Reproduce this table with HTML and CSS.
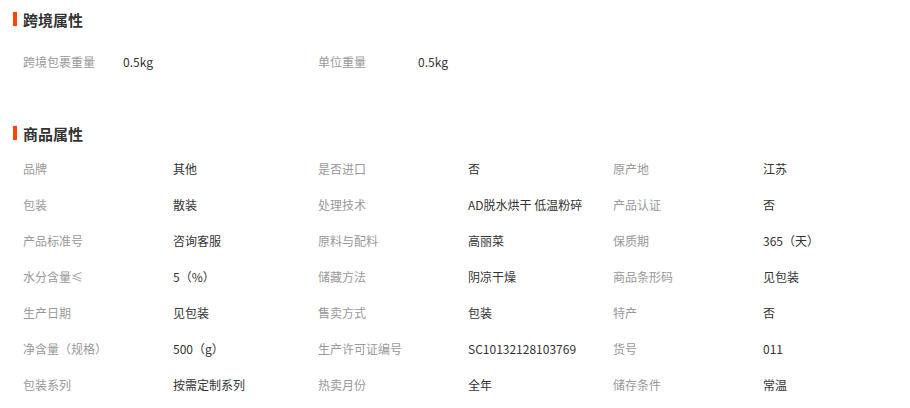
FILE: index.html
```html
<!DOCTYPE html>
<html lang="zh-CN">
<head>
    <meta charset="UTF-8">
    <title>商品属性</title>
    <link rel="stylesheet" href="styles.css">
</head>
<body>
    <div class="attrs">
        <!-- 跨境属性 -->
        <div class="section cross">
            <h3 class="title">跨境属性</h3>
            <ul class="list list-cross">
                <li><span class="name">跨境包裹重量</span><span class="val">0.5kg</span></li>
                <li><span class="name">单位重量</span><span class="val">0.5kg</span></li>
            </ul>
        </div>

        <!-- 商品属性 -->
        <div class="section">
            <h3 class="title">商品属性</h3>
            <ul class="list">
                <li><span class="name">品牌</span><span class="val">其他</span></li>
                <li><span class="name">是否进口</span><span class="val">否</span></li>
                <li><span class="name">原产地</span><span class="val">江苏</span></li>
                <li><span class="name">包装</span><span class="val">散装</span></li>
                <li><span class="name">处理技术</span><span class="val">AD脱水烘干 低温粉碎</span></li>
                <li><span class="name">产品认证</span><span class="val">否</span></li>
                <li><span class="name">产品标准号</span><span class="val">咨询客服</span></li>
                <li><span class="name">原料与配料</span><span class="val">高丽菜</span></li>
                <li><span class="name">保质期</span><span class="val">365（天）</span></li>
                <li><span class="name">水分含量≤</span><span class="val">5（%）</span></li>
                <li><span class="name">储藏方法</span><span class="val">阴凉干燥</span></li>
                <li><span class="name">商品条形码</span><span class="val">见包装</span></li>
                <li><span class="name">生产日期</span><span class="val">见包装</span></li>
                <li><span class="name">售卖方式</span><span class="val">包装</span></li>
                <li><span class="name">特产</span><span class="val">否</span></li>
                <li><span class="name">净含量（规格）</span><span class="val">500（g）</span></li>
                <li><span class="name">生产许可证编号</span><span class="val">SC10132128103769</span></li>
                <li><span class="name">货号</span><span class="val">011</span></li>
                <li><span class="name">包装系列</span><span class="val">按需定制系列</span></li>
                <li><span class="name">热卖月份</span><span class="val">全年</span></li>
                <li><span class="name">储存条件</span><span class="val">常温</span></li>
            </ul>
        </div>
    </div>
</body>
</html>
```

FILE: styles.css
```css
body {
    margin: 0;
    background: #fff;
    font-family: "Noto Sans CJK SC", "Liberation Sans", sans-serif;
    font-size: 12px;
    color: #333;
}

.attrs {
    padding: 1px 0 0 13px;
}

.section {
    margin-bottom: 35px;
}

.section:last-child {
    margin-bottom: 0;
}

.title {
    margin: 0;
    height: 36px;
    display: flex;
    align-items: center;
    font-size: 15px;
    font-weight: bold;
    color: #333;
}

/* orange mark in front of the title */
.title::before {
    content: "";
    width: 4px;
    height: 14px;
    background: #ff4400;
    margin-right: 6px;
}

.list {
    list-style: none;
    margin: 0;
    padding: 0 0 0 10px;
    display: grid;
    grid-template-columns: repeat(3, 295px);
}

.list li {
    display: flex;
    line-height: 36px;
    height: 36px;
}

.name {
    width: 150px;
    color: #999;
    flex-shrink: 0;
}

.val {
    color: #333;
}

.list-cross {
    padding-top: 7px;
    grid-template-columns: repeat(2, 295px);
}

.list-cross .name {
    width: 100px;
}
```
